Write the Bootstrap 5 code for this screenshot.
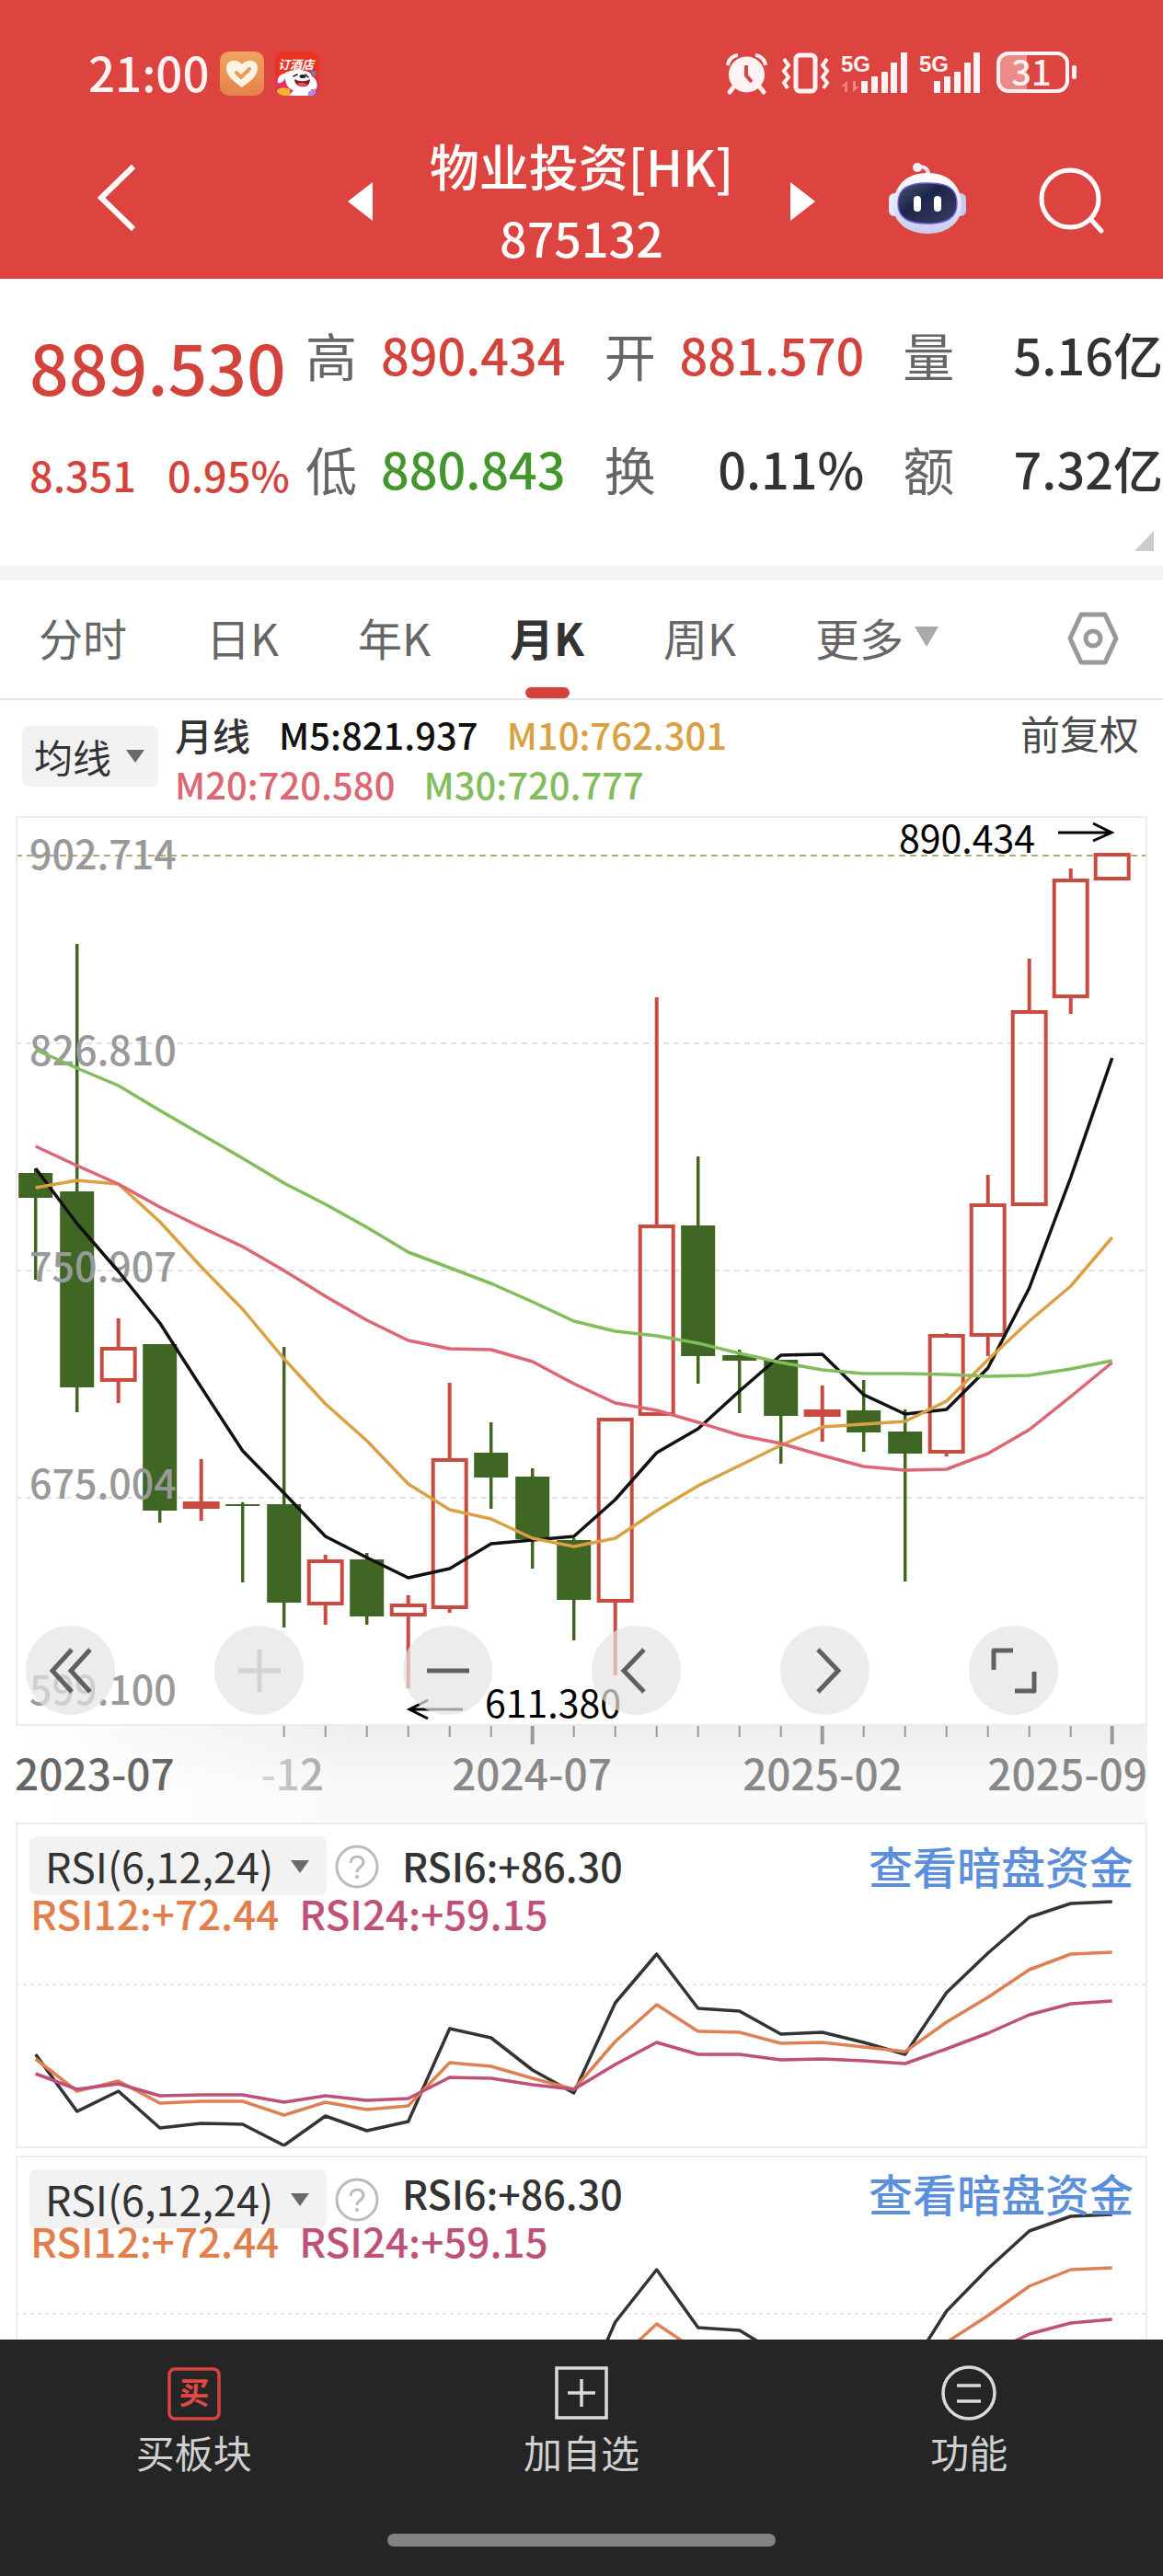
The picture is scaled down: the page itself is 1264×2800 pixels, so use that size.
<!DOCTYPE html>
<html lang="zh-CN">
<head>
<meta charset="utf-8">
<meta name="viewport" content="width=device-width, initial-scale=1">
<title>物业投资[HK] 875132</title>
<link rel="stylesheet" href="https://cdn.jsdelivr.net/npm/bootstrap@5.3.0/dist/css/bootstrap.min.css">
<script src="https://cdn.jsdelivr.net/npm/bootstrap@5.3.0/dist/js/bootstrap.bundle.min.js"></script>
<style>
  body { font-family: "Noto Sans CJK SC", "Noto Sans", sans-serif; color: #333; background: #fff; }
  button, select { font-family: inherit; }
  svg { display: block; flex: none; overflow: visible; }
  svg text { font-family: "Noto Sans CJK SC", sans-serif; }
  svg .net { font-family: "Liberation Sans", sans-serif; font-size: 24px; font-weight: 700; }
  .plain-btn { border: 0; background: none; padding: 0; color: inherit; }
  .up { color: #d3433b; }
  .down { color: #42962b; }

  .app-head { background: #dd4440; color: #fff; padding: 56px 0 6px; flex: none; }
  .status-row { height: 48px; padding: 0 94px 0 96px; margin-bottom: 37px; color: #fff2f2; gap: 12px; }
  .clock { font-size: 51px; line-height: 40px; font-weight: 500; padding-bottom: 4px; }
  .title-row { display: grid; grid-template-columns: 1fr auto 1fr; align-items: center; }
  .title-row .side-left { padding-left: 104px; }
  .title-row .side-right { padding-right: 64px; gap: 80px; }
  .title-mid { gap: 62px; }
  .title-mid h1, .title-mid p { font-size: 54px; line-height: 78px; font-weight: 500; margin: 0; }
  .title-mid p { font-size: 52px; }

  .quote { padding-left: 32px; height: 312px; }
  .quote-main { width: 300px; padding-top: 36px; font-weight: 500; }
  .quote-main div { line-height: 118px; white-space: nowrap; }
  .last-price { font-size: 75px; }
  .change { font-size: 45px; gap: 34px; }
  .quote-grid { display: grid; grid-template-columns: repeat(3, 1fr); column-gap: 42px; padding-top: 20px; flex: 1; align-content: start; }
  .quote-grid div { font-size: 56px; line-height: 124px; white-space: nowrap; }
  .quote-grid span { color: #666; }
  .quote-grid b { font-weight: 500; font-size: 54px; }
  .fold { right: 10px; bottom: 16px; }
  .band { height: 16px; background: #f4f4f4; }

  .period-tabs { height: 130px; padding: 0 48px 0 42px; gap: 86px; border-bottom: 2px solid #e6e6e6; }
  .period-tabs button { font-size: 48px; line-height: 122px; padding-bottom: 6px; color: #666; position: relative; }
  .period-tabs .active { color: #333; font-weight: 700; }
  .period-tabs .active::after { content: ""; position: absolute; left: 50%; bottom: 0; width: 48px; height: 12px; margin-left: -24px; border-radius: 6px; background: #d3433b; }

  .pick { position: relative; }
  .pick select { appearance: none; border: 0; background: #f2f2f2; border-radius: 8px; color: #333; font-size: 42px; height: 66px; line-height: 66px; padding: 0 50px 0 13px; }
  .pick::after { content: ""; position: absolute; right: 15px; top: 26px; border: 10px solid transparent; border-top: 14px solid #6a6a6a; border-bottom: 0; pointer-events: none; }
  .ma-row { padding: 10px 26px 0 24px; height: 126px; }
  .ma-row .pick { margin: 18px 18px 0 0; }
  .ma-vals { font-size: 41px; line-height: 54px; font-weight: 500; }
  .ma-vals div { gap: 31px; white-space: nowrap; }
  .ma-vals .num { font-size: 40px; }
  .adjust { font-size: 43px; line-height: 50px; color: #4a4a4a; }

  .panel { margin: 0 17px; border: 2px solid #ececec; position: relative; }
  .panel svg.plot { width: 100%; height: auto; overflow: hidden; }
  .tools { position: absolute; left: 9px; right: 95px; bottom: 10px; }
  .tools button { width: 97px; height: 97px; border: 0; padding: 0; border-radius: 50%; background: rgba(228,228,228,.7); display: flex; align-items: center; justify-content: center; }
  .axis { margin: 0 17px; background: linear-gradient(to right, #fff 0, rgba(255,255,255,0) 30%), linear-gradient(#eeeeee, #fafafa 70%); }
  .axis svg { width: 100%; height: auto; }

  .legend-box { position: absolute; left: 13px; right: 13px; top: 13px; }
  .legend-box .pick select { font-size: 45px; height: 64px; line-height: 64px; padding: 0 57px 0 17px; }
  .legend-box .pick::after { right: 19px; }
  .legend-box .help { margin: 9px 25px 0 9px; }
  .legend-box .line-one { height: 52px; }
  .legend-box .line-two { gap: 22px; padding-left: 1px; position: relative; }
  .legend-box .txt { font-size: 43px; line-height: 50px; font-weight: 500; white-space: nowrap; }
  .legend-box .line-two .txt { font-size: 44px; }
  .legend-box a { font-size: 48px; line-height: 50px; color: #5b8fdc; text-decoration: none; font-weight: 500; white-space: nowrap; }
  .low-text { padding-top: 6px; }
  .rsi-gap { margin-bottom: 8px; }

  .bottom-nav { background: #252525; color: #d0d0d0; height: 257px; flex: none; }
  .bottom-nav .plain-btn { flex: 1; padding-top: 27px; display: flex; flex-direction: column; align-items: center; font-size: 42px; line-height: 60px; gap: 3px; }
  .home-bar { width: 422px; height: 14px; border-radius: 7px; background: #828282; margin: 0 auto 32px; }
</style>
</head>
<body class="vh-100 d-flex flex-column overflow-hidden">

<header class="app-head">
  <div class="status-row d-flex align-items-center">
    <span class="clock">21:00</span>
    <svg width="48" height="48" viewBox="0 0 48 48">
      <defs><linearGradient id="hg" x1="0" y1="0" x2="0" y2="1"><stop offset="0" stop-color="#f2a35f"/><stop offset="1" stop-color="#e6824b"/></linearGradient></defs>
      <rect width="48" height="48" rx="10" fill="url(#hg)"/>
      <path d="M24 39C18 34 7 28 7 18C7 9 18 7 24 14C30 7 41 9 41 18C41 28 30 34 24 39Z" fill="#fff4e2"/>
      <path d="M18 23l5 5 9-9" fill="none" stroke="#ec9a5a" stroke-width="4" stroke-linecap="round" stroke-linejoin="round"/>
    </svg>
    <svg width="48" height="48" viewBox="0 0 48 48">
      <defs><clipPath id="jc"><rect width="48" height="48" rx="10"/></clipPath></defs>
      <g clip-path="url(#jc)">
        <rect width="48" height="48" fill="#ea3323"/>
        <rect y="30" width="48" height="18" fill="#e4305c"/>
        <path d="M10 24C4 25 2 30 3 34C6 35 9 33 11 29C11 36 15 41 20 42L15 48H42L39 41L44 42C47 38 46 30 40 27C39 22 32 20 26 20C19 20 14 21 10 24Z" fill="#fff"/>
        <path d="M20 27l4-2M36 28l-3-3" stroke="#222" stroke-width="1.6" stroke-linecap="round"/>
        <ellipse cx="30" cy="27" rx="3.5" ry="2" fill="#222"/>
        <path d="M21 30C27 33 32 33 38 30C38 36 34 39 29 38C24 38 21 34 21 30Z" fill="#8c1a1a"/>
        <path d="M24 35C28 33 32 34 35 36C31 39 27 38 24 35Z" fill="#f0505a"/>
        <path d="M2 42c4-4 10-3 14-1v7H2z" fill="#f7b52e"/>
        <path d="M39 21l5 5m0-5l-4 5" stroke="#4b8ff5" stroke-width="2"/>
        <path d="M36 44l8-4v8h-8z" fill="#a98bf0"/>
      </g>
      <text x="3" y="19" font-size="13" font-weight="700" font-style="italic" fill="#fff">订酒店</text>
    </svg>
    <svg class="ms-auto" width="380" height="48" viewBox="790 56 380 48" fill="#fff2f2">
      <circle cx="811.500" cy="81" r="19.500"/>
      <path d="M791 71a12 12 0 0 1 11-11M821 60a12 12 0 0 1 11 11" fill="none" stroke="#fff2f2" stroke-width="4"/>
      <path d="M797 95l-4 5M826 95l4 5" stroke="#fff2f2" stroke-width="5" stroke-linecap="round"/>
      <path d="M811 71v11l6 7" fill="none" stroke="#dd4440" stroke-width="4"/>
      <rect x="865" y="60" width="21" height="39" rx="4" fill="none" stroke="#fff2f2" stroke-width="5"/>
      <path d="M852 64l5 7-5 6 5 7-5 6 4 6M899 64l-5 7 5 6-5 7 5 6-4 6" fill="none" stroke="#fff2f2" stroke-width="4"/>
      <text class="net" x="914" y="78">5G</text>
      <path d="M921 88l-7 6h4v6h3zM927 100l7-6h-4v-6h-3z" fill="#ef8581"/>
      <path d="M936 88h7v13h-7zM947 83h7v18h-7zM958 78h7v23h-7zM968 68h7v33h-7zM979 57h7v44h-7z"/>
      <text class="net" x="999" y="78">5G</text>
      <path d="M1015 88h7v13h-7zM1026 83h7v18h-7zM1037 78h7v23h-7zM1048 68h7v33h-7zM1058 57h7v44h-7z"/>
      <path d="M1095 58h21v41h-21a10 10 0 0 1-10-10v-21a10 10 0 0 1 10-10z" fill="#ec8b88"/>
      <rect x="1085" y="58" width="75" height="41" rx="11" fill="none" stroke="#fff2f2" stroke-width="4"/>
      <rect x="1165" y="71" width="5" height="15" rx="2"/>
      <text x="1121" y="93" font-size="38" font-weight="500" text-anchor="middle">31</text>
    </svg>
  </div>
  <div class="title-row">
    <div class="side-left">
      <button class="plain-btn" aria-label="返回"><svg width="48" height="76" viewBox="0 0 48 76"><path d="M41 2L6 36L41 70" fill="none" stroke="#fff" stroke-width="6"/></svg></button>
    </div>
    <div class="title-mid d-flex align-items-center text-center">
      <button class="plain-btn" aria-label="上一个"><svg width="27" height="42" viewBox="0 0 27 42"><path d="M27 0V42L0 21Z" fill="#fff"/></svg></button>
      <div><h1>物业投资[HK]</h1><p>875132</p></div>
      <button class="plain-btn" aria-label="下一个"><svg width="27" height="42" viewBox="0 0 27 42"><path d="M0 0V42L27 21Z" fill="#fff"/></svg></button>
    </div>
    <div class="side-right d-flex align-items-center justify-content-end">
      <button class="plain-btn" aria-label="智能助手"><svg width="84" height="84" viewBox="0 0 84 84">
        <defs><linearGradient id="rb" x1="0" y1="0" x2="0" y2="1"><stop offset="0" stop-color="#fff"/><stop offset="1" stop-color="#c9cbf2"/></linearGradient>
        <linearGradient id="rf" x1="0" y1="0" x2="1" y2="1"><stop offset="0" stop-color="#4a5576"/><stop offset=".4" stop-color="#1d2647"/><stop offset="1" stop-color="#3a3f63"/></linearGradient></defs>
        <path d="M31 5C38 3 43 6 43 13" fill="none" stroke="#f3e6f6" stroke-width="4"/><circle cx="31" cy="5" r="5" fill="#f3ecfb"/>
        <rect x="0" y="33" width="12" height="25" rx="6" fill="#e8e8fb"/><rect x="72" y="33" width="12" height="25" rx="6" fill="#c6caf0"/>
        <path d="M42 11C65 11 79 25 79 47C79 66 62 77 42 77C22 77 5 66 5 47C5 25 19 11 42 11Z" fill="url(#rb)"/>
        <path d="M42 22C64 22 74 28 74 44C74 60 63 66 42 66C21 66 10 60 10 44C10 28 21 22 42 22Z" fill="url(#rf)" stroke="#6a5cd8" stroke-width="1.500"/>
        <rect x="27" y="36" width="8" height="17" rx="4" fill="#fff"/><rect x="49" y="36" width="8" height="17" rx="4" fill="#fff"/>
      </svg></button>
      <button class="plain-btn" aria-label="搜索"><svg width="70" height="76" viewBox="0 0 70 76"><circle cx="33" cy="35" r="31" fill="none" stroke="#fff" stroke-width="5"/><path d="M56 58L67 70" stroke="#fff" stroke-width="5" stroke-linecap="round"/></svg></button>
    </div>
  </div>
</header>

<main class="flex-grow-1 overflow-hidden" style="min-height:0">
  <section class="quote d-flex position-relative">
    <div class="quote-main up">
      <div class="last-price">889.530</div>
      <div class="change d-flex"><span>8.351</span><span>0.95%</span></div>
    </div>
    <div class="quote-grid">
      <div class="d-flex justify-content-between"><span>高</span><b class="up">890.434</b></div>
      <div class="d-flex justify-content-between"><span>开</span><b class="up">881.570</b></div>
      <div class="d-flex justify-content-between"><span>量</span><b>5.16亿</b></div>
      <div class="d-flex justify-content-between"><span>低</span><b class="down">880.843</b></div>
      <div class="d-flex justify-content-between"><span>换</span><b>0.11%</b></div>
      <div class="d-flex justify-content-between"><span>额</span><b>7.32亿</b></div>
    </div>
    <svg class="fold position-absolute" width="21" height="22" viewBox="0 0 21 22"><path d="M21 0V22H0Z" fill="#ccc"/></svg>
  </section>
  <div class="band"></div>

  <nav class="period-tabs d-flex align-items-center">
    <button class="plain-btn">分时</button>
    <button class="plain-btn">日K</button>
    <button class="plain-btn">年K</button>
    <button class="plain-btn active">月K</button>
    <button class="plain-btn">周K</button>
    <button class="plain-btn d-flex align-items-center">更多<svg style="margin-left:12px" width="26" height="22" viewBox="0 0 26 22"><path d="M0 0H26L13 22Z" fill="#aaa"/></svg></button>
    <button class="plain-btn ms-auto" aria-label="设置"><svg width="56" height="56" viewBox="0 0 56 56" fill="none" stroke="#999" stroke-width="5" stroke-linejoin="round"><path d="M15 4H41L53 30L41 56H15L3 30Z"/><circle cx="28" cy="30" r="8"/></svg></button>
  </nav>

  <section class="ma-row d-flex align-items-start">
    <label class="pick"><select aria-label="指标"><option>均线</option></select></label>
    <div class="ma-vals">
      <div class="d-flex"><span>月线</span><span class="num" style="color:#111">M5:821.937</span><span class="num" style="color:#d9a142">M10:762.301</span></div>
      <div class="d-flex num"><span style="color:#dc6673">M20:720.580</span><span style="color:#82bd5c">M30:720.777</span></div>
    </div>
    <button class="plain-btn adjust ms-auto">前复权</button>
  </section>

  <section class="panel">
    <svg class="plot" id="kline" viewBox="19 889 1226 985">
      <g fill="none" stroke="#e2e2e2" stroke-width="2" stroke-dasharray="6 5"><path d="M17 1134H1247M17 1381H1247M17 1628H1247"/></g>
      <path d="M17 930H1247" stroke="#b9a67a" stroke-width="2" stroke-dasharray="7 5"/>
      <g id="candles"></g>
      <g font-size="43" font-weight="500" fill="#999">
        <text x="32" y="945">902.714</text><text x="32" y="1158">826.810</text><text x="32" y="1393">750.907</text><text x="32" y="1629">675.004</text><text x="32" y="1853">599.100</text>
      </g>
      <g id="averages" fill="none" stroke-width="3.500" stroke-linejoin="round"></g>
      <g font-size="41" fill="#000"><text x="977" y="927">890.434</text><text x="527" y="1867">611.380</text></g>
      <g fill="none" stroke="#000" stroke-width="3"><path d="M1150 905H1208M1188 895L1208 905L1188 914"/><path d="M503 1858H445M465 1848L445 1858L465 1868"/></g>
    </svg>
    <div class="tools d-flex justify-content-between">
      <button aria-label="最早"><svg width="48" height="50" viewBox="0 0 48 50" fill="none" stroke="#606060" stroke-width="5"><path d="M25 2L4 25L25 48M45 2L24 25L45 48"/></svg></button>
      <button aria-label="放大"><svg width="46" height="46" viewBox="0 0 46 46" stroke="#d2d2d2" stroke-width="5"><path d="M0 23H46M23 0V46"/></svg></button>
      <button aria-label="缩小"><svg width="46" height="46" viewBox="0 0 46 46" stroke="#606060" stroke-width="5"><path d="M0 23H46"/></svg></button>
      <button aria-label="左移"><svg width="36" height="50" viewBox="0 0 36 50" fill="none" stroke="#606060" stroke-width="5"><path d="M26 2L4 25L26 48"/></svg></button>
      <button aria-label="右移"><svg width="36" height="50" viewBox="0 0 36 50" fill="none" stroke="#606060" stroke-width="5"><path d="M10 2L32 25L10 48"/></svg></button>
      <button aria-label="全屏"><svg width="50" height="50" viewBox="0 0 50 50" fill="none" stroke="#606060" stroke-width="5" stroke-linejoin="round"><path d="M3 24V3H24M47 26V47H26"/></svg></button>
    </div>
  </section>

  <section class="axis">
    <svg viewBox="17 1876 1230 105">
      <defs><linearGradient id="fade" gradientUnits="userSpaceOnUse" x1="270" y1="0" x2="360" y2="0"><stop offset="0" stop-color="#e0e0e0"/><stop offset="1" stop-color="#a4a4a4"/></linearGradient></defs>
      <g id="ticks" stroke="#999"></g>
      <g font-size="46" font-weight="500" fill="#888">
        <text x="16" y="1946" fill="#666">2023-07</text>
        <text x="352" y="1946" text-anchor="end" fill="url(#fade)">-12</text>
        <text x="578" y="1946" text-anchor="middle">2024-07</text>
        <text x="894" y="1946" text-anchor="middle">2025-02</text>
        <text x="1247" y="1946" text-anchor="end">2025-09</text>
      </g>
    </svg>
  </section>

  <section class="panel rsi-gap">
    <svg class="plot rsi" viewBox="19 2 1226 350" data-scale="1" data-top="86" data-mid="176"></svg>
    <div class="legend-box">
      <div class="line-one d-flex align-items-start">
        <label class="pick"><select aria-label="副图指标一"><option>RSI(6,12,24)</option></select></label>
        <svg class="help" width="48" height="48" viewBox="0 0 48 48"><circle cx="24" cy="24" r="22" fill="none" stroke="#bbb" stroke-width="3"/><path d="M17 20C17 11 31 11 31 19C31 25 24 24 24 30" fill="none" stroke="#bbb" stroke-width="3"/><circle cx="24" cy="35" r="2" fill="#bbb"/></svg>
        <span class="txt low-text">RSI6:+86.30</span>
        <a class="ms-auto low-text" href="#">查看暗盘资金</a>
      </div>
      <div class="line-two d-flex low-text"><span class="txt" style="color:#e27e4c">RSI12:+72.44</span><span class="txt" style="color:#be5079">RSI24:+59.15</span></div>
    </div>
  </section>

  <section class="panel">
    <svg class="plot rsi" viewBox="19 2 1226 350" data-scale="1.060" data-top="64" data-mid="172"></svg>
    <div class="legend-box">
      <div class="line-one d-flex align-items-start">
        <label class="pick"><select aria-label="副图指标二"><option>RSI(6,12,24)</option></select></label>
        <svg class="help" width="48" height="48" viewBox="0 0 48 48"><circle cx="24" cy="24" r="22" fill="none" stroke="#bbb" stroke-width="3"/><path d="M17 20C17 11 31 11 31 19C31 25 24 24 24 30" fill="none" stroke="#bbb" stroke-width="3"/><circle cx="24" cy="35" r="2" fill="#bbb"/></svg>
        <span class="txt">RSI6:+86.30</span>
        <a class="ms-auto" href="#">查看暗盘资金</a>
      </div>
      <div class="line-two d-flex"><span class="txt" style="color:#e27e4c">RSI12:+72.44</span><span class="txt" style="color:#be5079">RSI24:+59.15</span></div>
    </div>
  </section>
</main>

<footer class="bottom-nav d-flex flex-column justify-content-between">
  <div class="d-flex">
    <button class="plain-btn"><svg width="62" height="62" viewBox="0 0 62 62"><rect x="4" y="5" width="54" height="54" rx="6" fill="none" stroke="#d8443f" stroke-width="3.500"/><text x="31" y="43" font-size="33" font-weight="700" fill="#e04844" text-anchor="middle">买</text></svg>买板块</button>
    <button class="plain-btn"><svg width="62" height="62" viewBox="0 0 62 62" fill="none" stroke="#dadada" stroke-width="3.500"><path d="M4 4H58V58H4ZM16 31H46M31 16V46"/></svg>加自选</button>
    <button class="plain-btn"><svg width="62" height="62" viewBox="0 0 62 62" fill="none" stroke="#dadada" stroke-width="3.500"><circle cx="31" cy="31" r="28"/><path d="M18 23H44M18 40H44"/></svg>功能</button>
  </div>
  <div class="home-bar"></div>
</footer>

<script>
  const X = i => Math.round((38.7 + i * 45) * 10) / 10;
  // [rising, high, body top, body bottom, low] in plot units
  const candles = [
    [0,1270,1275,1302,1391],[0,1026,1295,1508,1535],[1,1433,1466,1500,1525],[0,1461,1461,1642,1655],
    [1,1586,1634,1638,1653],[0,1633,1635,1637,1720],[0,1464,1635,1742,1769],[1,1690,1697,1743,1766],
    [0,1688,1695,1757,1766],[1,1734,1745,1755,1835],[1,1503,1587,1747,1753],[0,1546,1579,1606,1640],
    [0,1596,1605,1673,1705],[0,1672,1674,1739,1783],[1,1543,1543,1740,1821],[1,1084,1333,1537,1537],
    [0,1257,1332,1474,1504],[0,1467,1473,1479,1536],[0,1478,1478,1539,1591],[1,1506,1534,1538,1567],
    [0,1500,1533,1557,1578],[0,1532,1556,1580,1719],[1,1449,1452,1578,1583],[1,1277,1310,1451,1474],
    [1,1042,1100,1309,1309],[1,944,957,1083,1102],[1,929,929,955,957]];
  document.getElementById('candles').innerHTML = candles.map(([up, h, t, b, l], i) => {
    const x = X(i), c = up ? '#c94b42' : '#3f6623';
    const wick = `<path d="M${x} ${h}V${t}M${x} ${b}V${l}" stroke="${c}" stroke-width="${up ? 4 : 3.5}"/>`;
    return wick + (up
      ? `<rect x="${x - 18}" y="${t}" width="36" height="${b - t}" fill="none" stroke="${c}" stroke-width="4"/>`
      : `<rect x="${x - 18.5}" y="${t}" width="37" height="${b - t}" fill="${c}"/>`);
  }).join('');

  const line = (ys, color) => `<polyline points="${ys.map((y, i) => X(i) + ',' + y).join(' ')}" stroke="${color}"/>`;
  document.getElementById('averages').innerHTML =
    line([1270,1330,1382,1438,1508,1577,1623,1670,1693,1715,1705,1678,1674,1670,1630,1579,1553,1512,1473,1472,1516,1537,1532,1487,1400,1280,1150], '#111') +
    line([1291,1283,1287,1328,1377,1423,1477,1526,1566,1613,1641,1651,1672,1681,1672,1642,1615,1593,1571,1551,1548,1545,1523,1478,1436,1398,1345], '#d9a142') +
    line([1246,1267,1287,1312,1334,1355,1381,1409,1435,1457,1466,1467,1480,1504,1525,1533,1546,1560,1569,1582,1594,1598,1597,1580,1554,1518,1481], '#dc6673') +
    line([1141,1161,1180,1207,1233,1259,1286,1309,1334,1361,1378,1395,1415,1436,1447,1452,1460,1471,1481,1489,1493,1493,1494,1496,1495,1488,1479], '#82bd5c');

  document.getElementById('ticks').innerHTML = Array.from({ length: 21 }, (_, k) => k + 6).map(i => {
    const major = i % 7 === 5;
    return `<path d="M${X(i)} 1876V${major ? 1896 : 1888}" stroke-width="${major ? 4 : 2}"/>`;
  }).join('');

  const rsi = [
    ['#333', [252,314,292,332,327,328,351,319,335,325,224,234,269,294,196,143,202,205,230,228,239,252,185,142,103,88,86]],
    ['#df8053', [257,292,281,305,303,303,318,304,312,308,261,265,278,290,238,198,227,228,240,239,244,249,217,190,160,143,141]],
    ['#be5079', [273,290,284,297,296,296,304,297,302,300,277,278,285,290,263,239,252,252,258,257,259,262,246,229,209,197,194]]];
  document.querySelectorAll('.rsi').forEach(s => {
    const k = +s.dataset.scale, top = +s.dataset.top, mid = s.dataset.mid;
    s.innerHTML = `<path d="M17 ${mid}H1247" stroke="#e6e6e6" stroke-width="2" stroke-dasharray="4 4"/>` +
      `<g fill="none" stroke-width="3.5" stroke-linejoin="round">${rsi.map(([c, ys]) => line(ys.map(y => Math.round((y - 86) * k + top)), c)).join('')}</g>`;
  });
</script>
</body>
</html>
